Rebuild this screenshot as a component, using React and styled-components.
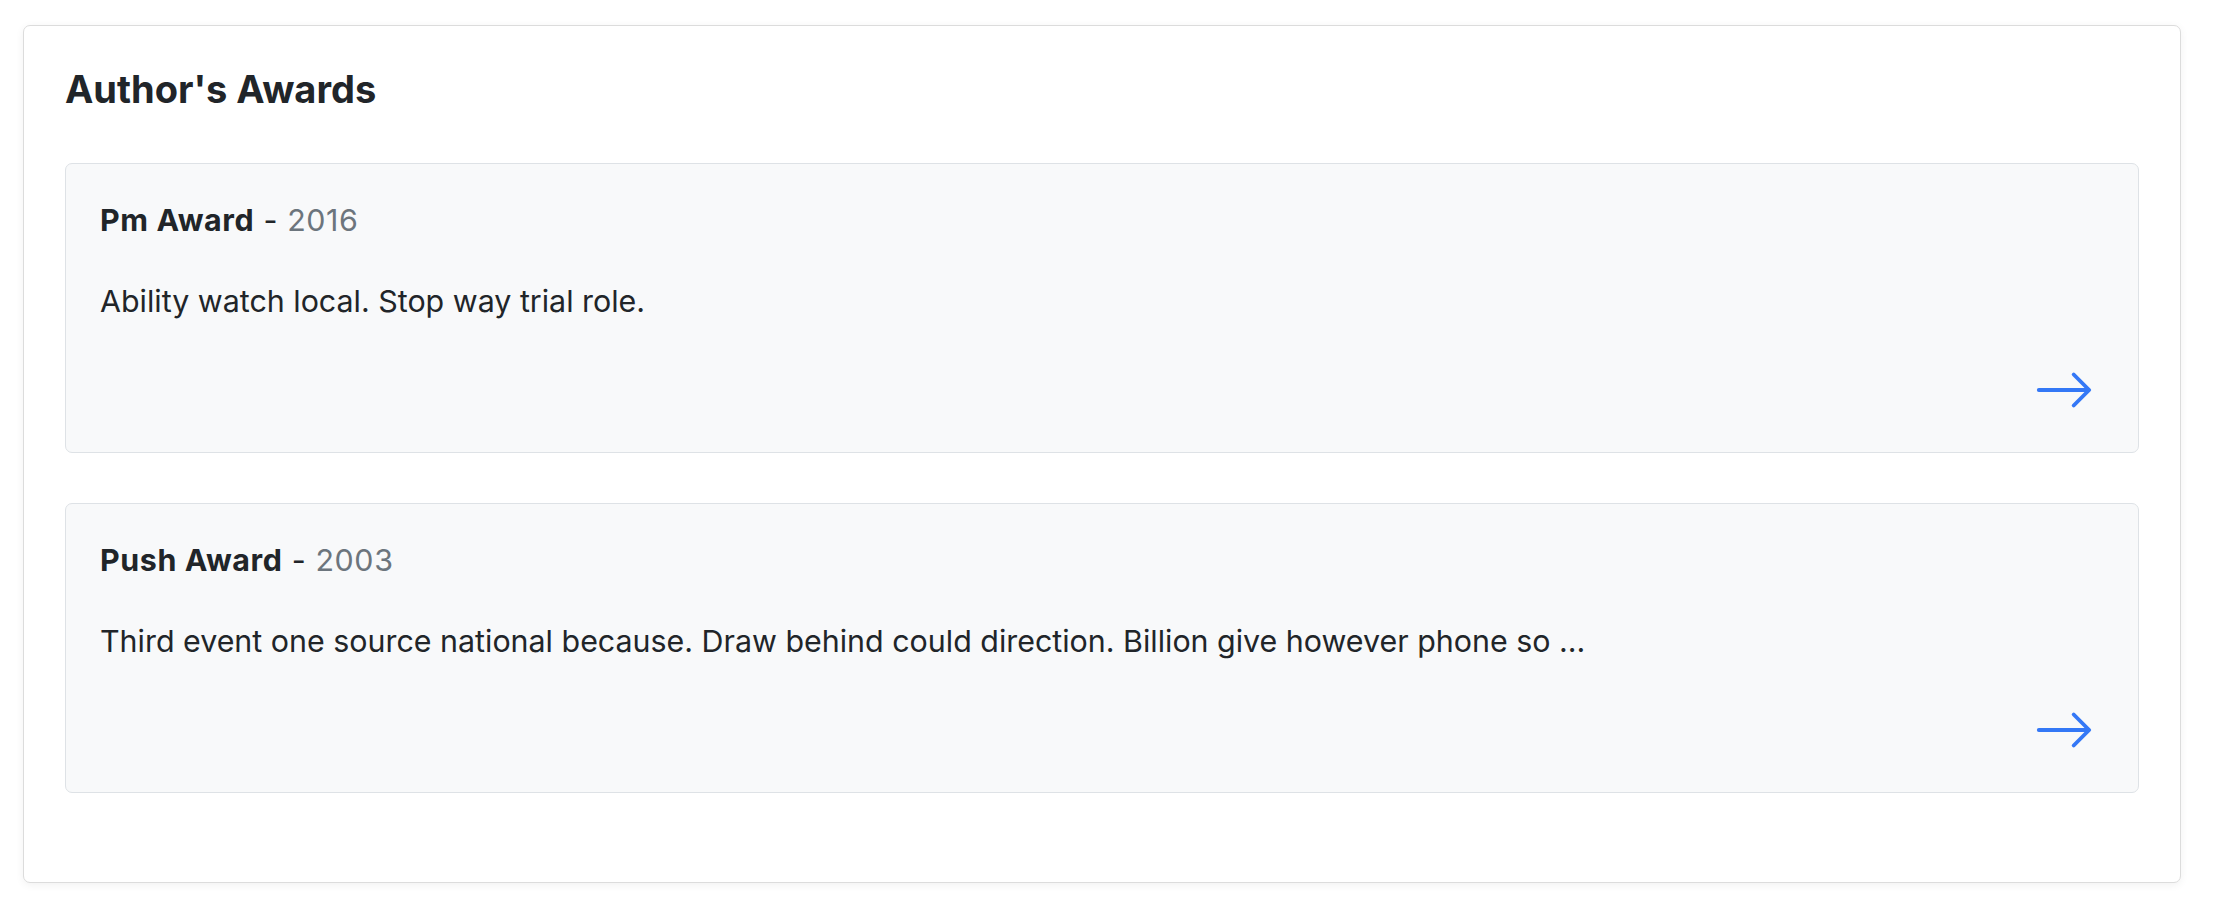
import React from 'react'
import styled, { createGlobalStyle } from 'styled-components'
import { BsArrowRight } from 'react-icons/bs'

const awards = [
    { name: 'Pm Award', year: 2016, text: 'Ability watch local. Stop way trial role.' },
    { name: 'Push Award', year: 2003, text: 'Third event one source national because. Draw behind could direction. Billion give however phone so ...' },
]

const App = () => {
    return (
        <>
            <GlobalStyle />
            <Page>
                <Panel>
                    <Heading>Author's Awards</Heading>
                    {awards.map((award) => (
                        <AwardCard key={award.name}>
                            <AwardTitle>
                                <strong>{award.name}</strong> - <Year>{award.year}</Year>
                            </AwardTitle>
                            <AwardText>{award.text}</AwardText>
                            <ArrowRow>
                                <ArrowLink href="#">
                                    <BsArrowRight />
                                </ArrowLink>
                            </ArrowRow>
                        </AwardCard>
                    ))}
                </Panel>
            </Page>
        </>
    )
}

export default App

const GlobalStyle = createGlobalStyle`
body {
    margin: 0;
    background: #fff;
    font-family: Inter, "Noto Sans", sans-serif;
    color: #212529;
}
`;

const Page = styled.div`
padding: 25px 51px 30px 23px;
`;

const Panel = styled.div`
background: #fff;
border: 1px solid #dcdcdc;
border-radius: 7px;
box-shadow: 0 2px 8px rgba(0, 0, 0, 0.06);
padding: 41px 41px 39px;
`;

const Heading = styled.h2`
margin: 0 0 50px;
font-size: 38px;
line-height: 1.2;
font-weight: 700;
letter-spacing: 0;
color: #212529;
`;

const AwardCard = styled.div`
display: flex;
flex-direction: column;
background: #f8f9fa;
border: 1px solid #dee2e6;
border-radius: 7px;
padding: 34px 43px 31px 34px;
margin-bottom: 50px;
`;

const AwardTitle = styled.div`
font-size: 30.4px;
line-height: 45px;
letter-spacing: 0.6px;
color: #212529;

strong {
    font-weight: 700;
}
`;

const Year = styled.span`
color: #6c757d;
`;

const AwardText = styled.p`
margin: 36px 0 35px;
font-size: 30.4px;
line-height: 45px;
color: #212529;
`;

const ArrowRow = styled.div`
display: flex;
justify-content: flex-end;
`;

const ArrowLink = styled.a`
display: flex;
color: #3478f6;
font-size: 62px;
line-height: 1;
`;
